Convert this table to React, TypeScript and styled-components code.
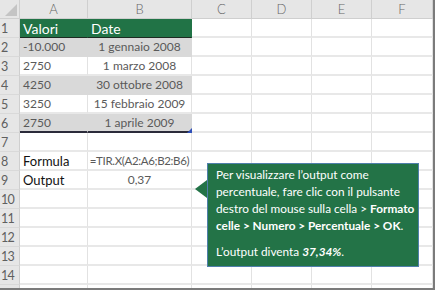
import styled, { createGlobalStyle } from "styled-components";

const GlobalStyle = createGlobalStyle`
  html, body {
    margin: 0;
    padding: 0;
    background: #ffffff;
    overflow: hidden;
  }
  body {
    font-family: Lato, "Liberation Sans", sans-serif;
  }
`;

const COLS = ["A", "B", "C", "D", "E", "F"];
const COL_WIDTHS = "20px 68px 104px 60px 60px 60px 61px";

type Fill = "green" | "gray" | "white";

interface RowData {
  n?: number;
  a?: string;
  b?: string;
  fill?: Fill;
  dark?: boolean;
  last?: boolean;
  tight?: boolean;
}

const rows: RowData[] = [
  { n: 1, a: "Valori", b: "Date", fill: "green" },
  { n: 2, a: "-10.000", b: "1 gennaio 2008", fill: "gray" },
  { n: 3, a: "2750", b: "1 marzo 2008", fill: "white" },
  { n: 4, a: "4250", b: "30 ottobre 2008", fill: "gray" },
  { n: 5, a: "3250", b: "15 febbraio 2009", fill: "white" },
  { n: 6, a: "2750", b: "1 aprile 2009", fill: "gray", last: true },
  { n: 7 },
  { n: 8, a: "Formula", b: "=TIR.X(A2:A6;B2:B6)", dark: true, tight: true },
  { n: 9, a: "Output", b: "0,37", dark: true },
  { n: 10 },
  { n: 11 },
  { n: 12 },
  { n: 13 },
  { n: 14 },
  {},
];

export default function App() {
  return (
    <>
      <GlobalStyle />
      <Frame>
        <Sheet>
          <Corner>
            <CornerMark />
          </Corner>
          {COLS.map((c) => (
            <ColHead key={c}>{c}</ColHead>
          ))}
          {rows.map((r, i) => (
            <Row key={i} r={r} />
          ))}
        </Sheet>
        <Callout>
          <CalloutText>
            Per visualizzare l’output come
            <br />
            percentuale, fare clic con il pulsante
            <br />
            destro del mouse sulla cella &gt; <b>Formato</b>
            <br />
            <b>celle &gt; Numero &gt; Percentuale &gt; OK</b>.
          </CalloutText>
          <CalloutText>
            L’output diventa{" "}
            <b>
              <i>37,34%</i>
            </b>
            .
          </CalloutText>
        </Callout>
      </Frame>
    </>
  );
}

const Row = ({ r }: { r: RowData }) => {
  const fill = r.fill ?? "white";
  return (
    <>
      <RowHead>{r.n}</RowHead>
      <Cell $fill={fill} $dark={r.dark} $last={r.last}>
        {r.a}
      </Cell>
      <Cell
        $fill={fill}
        $last={r.last}
        $center={fill !== "green"}
        $tight={r.tight}
      >
        {r.b}
        {r.last && <Handle />}
      </Cell>
      {COLS.slice(2).map((c) => (
        <Cell key={c} $fill="white" />
      ))}
    </>
  );
};

const Frame = styled.div`
  position: relative;
  width: 435px;
  height: 290px;
  box-sizing: border-box;
  border-right: 2px solid #7b7b7b;
  border-bottom: 2px solid #7b7b7b;
  overflow: hidden;
`;

const Sheet = styled.div`
  display: grid;
  grid-template-columns: ${COL_WIDTHS};
  grid-auto-rows: 19px;
`;

const Corner = styled.div`
  position: relative;
  background: #e6e6e6;
  border-right: 1px solid #cfcfcf;
  border-bottom: 1px solid #cfcfcf;
  box-sizing: border-box;
`;

const CornerMark = styled.div`
  position: absolute;
  right: 2px;
  bottom: 2px;
  width: 0;
  height: 0;
  border-left: 12px solid transparent;
  border-bottom: 12px solid #c4c4c4;
`;

const ColHead = styled.div`
  display: flex;
  align-items: center;
  justify-content: center;
  background: #e6e6e6;
  color: #666666;
  font-size: 13px;
  font-weight: 300;
  border-right: 1px solid #cfcfcf;
  border-bottom: 1px solid #cfcfcf;
  box-sizing: border-box;
`;

const RowHead = styled.div`
  display: flex;
  align-items: center;
  padding-left: 1px;
  background: #e6e6e6;
  color: #5f5f5f;
  font-size: 12.5px;
  letter-spacing: -0.8px;
  border-right: 1px solid #cfcfcf;
  border-bottom: 1px solid #d9d9d9;
  box-sizing: border-box;
`;

const FILLS: Record<Fill, string> = {
  green: "#217346",
  gray: "#d9d9d9",
  white: "#ffffff",
};

const Cell = styled.div<{
  $fill: Fill;
  $dark?: boolean;
  $last?: boolean;
  $center?: boolean;
  $tight?: boolean;
}>`
  position: relative;
  display: flex;
  align-items: center;
  justify-content: ${(p) => (p.$center ? "center" : "flex-start")};
  padding: 0 3px;
  white-space: nowrap;
  overflow: visible;
  box-sizing: border-box;
  background: ${(p) => FILLS[p.$fill]};
  color: ${(p) =>
    p.$fill === "green" ? "#ffffff" : p.$dark ? "#111111" : "#5a5a5a"};
  font-size: ${(p) =>
    p.$fill === "green" ? "14px" : p.$dark ? "13px" : p.$tight ? "11.5px" : "12px"};
  letter-spacing: ${(p) => (p.$tight ? "-0.35px" : "normal")};
  border-right: 1px solid
    ${(p) => (p.$fill === "white" ? "#e2e2e2" : FILLS[p.$fill])};
  border-bottom: ${(p) =>
    p.$last
      ? "2px solid #2b2b3a"
      : p.$fill === "green"
        ? "1px solid #1d2b22"
        : `2px solid ${p.$fill === "gray" ? "#d9d9d9" : "#e8e8e8"}`};
`;

const Handle = styled.span`
  position: absolute;
  right: -1px;
  bottom: -2px;
  width: 0;
  height: 0;
  border-left: 5px solid transparent;
  border-bottom: 5px solid #2f4fb8;
`;

const Callout = styled.div`
  position: absolute;
  left: 207px;
  top: 163px;
  width: 212px;
  height: 104px;
  box-sizing: border-box;
  background: #237347;
  border: 1px solid #4f7fab;
  padding: 2px 8px;
  display: flex;
  flex-direction: column;
  gap: 9px;

  &::before {
    content: "";
    position: absolute;
    left: -13px;
    top: 16px;
    border-top: 9px solid transparent;
    border-bottom: 9px solid transparent;
    border-right: 12px solid #237347;
  }
`;

const CalloutText = styled.p`
  margin: 0;
  color: #ffffff;
  font-size: 11.8px;
  line-height: 17px;
  white-space: nowrap;
`;
